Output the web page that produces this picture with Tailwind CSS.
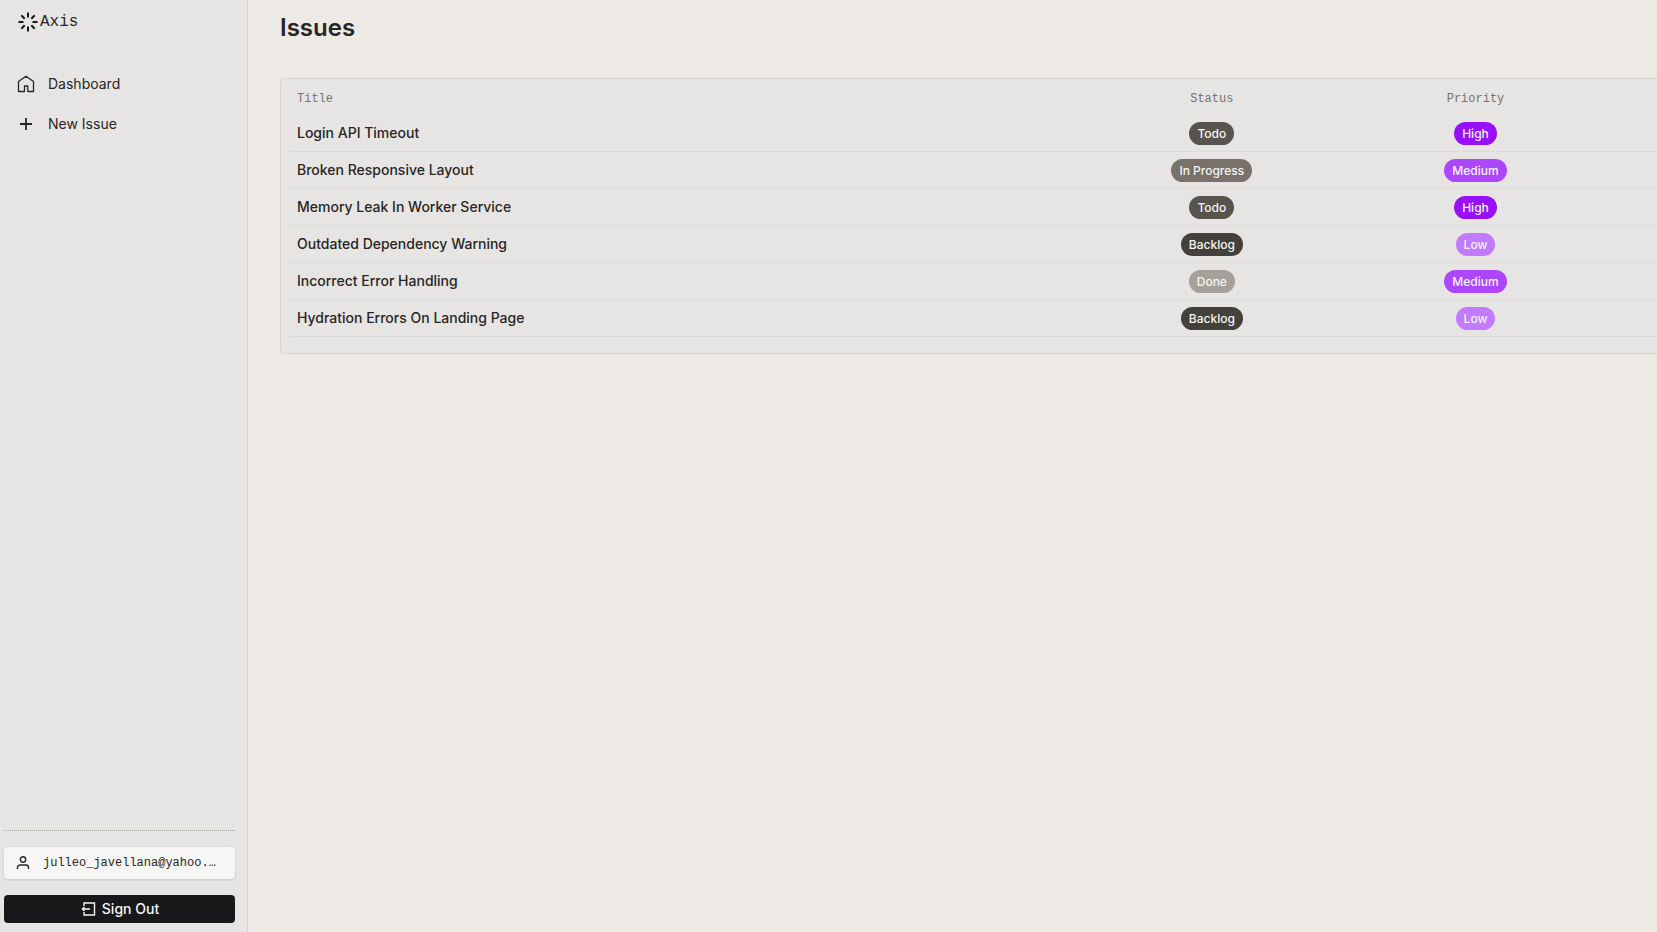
<!DOCTYPE html>
<html lang="en">
<head>
    <meta charset="UTF-8">
    <meta name="viewport" content="width=device-width, initial-scale=1.0">
    <title>Axis - Issues</title>
    <script src="https://cdn.jsdelivr.net/npm/@tailwindcss/browser@4"></script>
</head>
<body class="flex h-screen overflow-hidden bg-[#ede9e4] font-['Inter',sans-serif] text-stone-800">
    <!-- Sidebar -->
    <aside class="flex w-62 shrink-0 flex-col justify-between border-r border-stone-300 bg-[#e6e5e3] pb-[9px]">
        <div>
            <a href="#" class="flex items-center pt-[10px] pl-4 font-['Liberation_Mono',monospace] text-base text-stone-800">
                <svg class="size-6" viewBox="0 0 24 24" fill="none" stroke="#1c1917" stroke-width="2">
                    <path d="M12 2.500v5M12 16.500v5M2.500 12h5M16.500 12h5M5.300 5.300l3.400 3.400M15.300 15.300l3.400 3.400M5.300 18.700l3.400-3.400M15.300 8.700l3.400-3.400"/>
                </svg>
                <span>Axis</span>
            </a>
            <nav class="mt-[30px] flex flex-col text-sm">
                <a href="#" class="flex h-10 items-center gap-3 pl-4">
                    <svg class="size-5" viewBox="0 0 20 20" fill="none" stroke="currentColor" stroke-width="1.300" stroke-linejoin="round">
                        <path d="M2.500 17.500V7.500L10 2.200l7.500 5.300v10h-5.700v-5.500H8.500v5.500z"/>
                    </svg>
                    Dashboard
                </a>
                <a href="#" class="flex h-10 items-center gap-3 pl-4">
                    <svg class="size-5" viewBox="0 0 20 20" fill="none" stroke="currentColor" stroke-width="1.800">
                        <path d="M10 4v12M4 10h12"/>
                    </svg>
                    New Issue
                </a>
            </nav>
        </div>

        <!-- Account -->
        <div class="flex flex-col gap-4 pr-3 pl-1">
            <hr class="border-dotted border-stone-400">
            <div class="flex h-8 items-center gap-3 rounded-sm bg-[#f6f6f4] px-[11px] shadow-sm">
                <svg class="size-4 shrink-0" viewBox="0 0 16 16" fill="none" stroke="currentColor" stroke-width="1.400">
                    <circle cx="8" cy="4.500" r="2.700"/>
                    <path d="M2.500 14v-1.500a2.500 2.500 0 0 1 2.500-2.500h6a2.500 2.500 0 0 1 2.500 2.500v1.500"/>
                </svg>
                <span class="truncate pr-1 font-['Liberation_Mono',monospace] text-xs">julleo_javellana@yahoo.…</span>
            </div>
            <button type="button" class="flex h-7 items-center justify-center gap-1.5 rounded-sm bg-zinc-900 text-sm font-medium text-stone-100">
                <svg class="size-4" viewBox="0 0 16 16" fill="none" stroke="currentColor" stroke-width="1.400">
                    <path d="M4 5V2h10.500v12H4v-3M10 8H2M4.500 6L2.500 8l2 2"/>
                </svg>
                Sign Out
            </button>
        </div>
    </aside>

    <!-- Issues list -->
    <main class="min-w-0 flex-1 overflow-hidden pl-8">
        <h1 class="pt-3 text-2xl font-semibold">Issues</h1>
        <section class="mt-[34px] w-[calc(100vw-57px)] rounded-sm border border-stone-300 bg-[#e6e5e3] px-2 pb-4">
            <table class="block w-full">
                <thead class="block">
                    <tr class="grid h-9 grid-cols-6 items-center pt-1 font-['Liberation_Mono',monospace] text-xs text-stone-500">
                        <th class="col-span-3 px-2 text-left font-normal">Title</th>
                        <th class="font-normal">Status</th>
                        <th class="font-normal">Priority</th>
                        <th></th>
                    </tr>
                </thead>
                <tbody id="issues" class="block"></tbody>
            </table>
        </section>
    </main>

    <script>
        const issues = [
            { title: 'Login API Timeout', status: 'Todo', priority: 'High' },
            { title: 'Broken Responsive Layout', status: 'In Progress', priority: 'Medium' },
            { title: 'Memory Leak In Worker Service', status: 'Todo', priority: 'High' },
            { title: 'Outdated Dependency Warning', status: 'Backlog', priority: 'Low' },
            { title: 'Incorrect Error Handling', status: 'Done', priority: 'Medium' },
            { title: 'Hydration Errors On Landing Page', status: 'Backlog', priority: 'Low' },
        ];

        const colors = {
            'Backlog': 'bg-stone-700',
            'Todo': 'bg-stone-600',
            'In Progress': 'bg-stone-500',
            'Done': 'bg-stone-400',
            'Low': 'bg-purple-400',
            'Medium': 'bg-purple-500',
            'High': 'bg-purple-600',
        };

        const badge = (label) =>
            `<span class="rounded-full px-2 py-1 text-xs leading-[15px] font-medium text-stone-100 ${colors[label]}">${label}</span>`;

        document.getElementById('issues').innerHTML = issues.map((issue) => `
            <tr class="grid h-[37px] grid-cols-6 items-center border-b border-dotted border-stone-300">
                <td class="col-span-3 px-2 text-sm font-medium">${issue.title}</td>
                <td class="flex justify-center">${badge(issue.status)}</td>
                <td class="flex justify-center">${badge(issue.priority)}</td>
                <td></td>
            </tr>
        `).join('');
    </script>
</body>
</html>
